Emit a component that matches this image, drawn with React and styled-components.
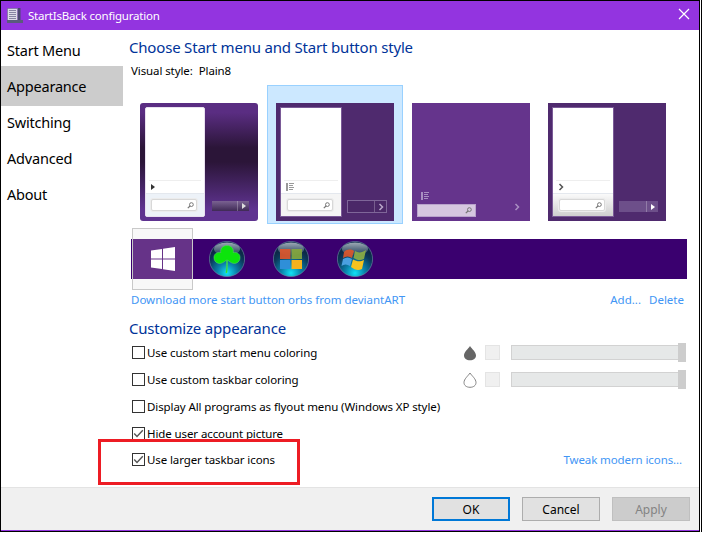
import React from "react";
import styled, { createGlobalStyle } from "styled-components";

const FONT = `"Noto Sans", "Open Sans", "Liberation Sans", sans-serif`;

const Global = createGlobalStyle`
  html, body {
    margin: 0;
    padding: 0;
    background: #fff;
  }
  body {
    width: 702px;
    height: 533px;
    overflow: hidden;
    font-family: ${FONT};
  }
  * {
    box-sizing: border-box;
  }
`;

const Frame = styled.div`
  position: relative;
  width: 700px;
  height: 532px;
  background: #fff;
  border: 1px solid #000;
  box-shadow: 1px 0 0 #fff, 2px 0 0 #000;
  display: flex;
  flex-direction: column;
`;

const TitleBar = styled.div`
  height: 29px;
  background: #9334e0;
  display: flex;
  align-items: center;
  padding-left: 6px;
  gap: 4px;
  color: #fff;
  font-size: 11.5px;
  letter-spacing: -0.2px;
  position: relative;
`;

const CloseBtn = styled.svg`
  position: absolute;
  right: 9px;
  top: 7px;
`;

const Body = styled.div`
  flex: 1;
  display: flex;
  min-height: 0;
`;

const Sidebar = styled.div`
  width: 122px;
  padding-top: 2px;
  display: flex;
  flex-direction: column;
`;

const NavItem = styled.div`
  height: 36px;
  line-height: 36px;
  padding-left: 6px;
  font-size: 14.5px;
  letter-spacing: -0.2px;
  color: #000;
  ${(p) =>
    p.$active &&
    `
    background: #cccccc;
    height: 40px;
    line-height: 40px;
    margin: -2px 0;
  `}
`;

const Main = styled.div`
  flex: 1;
  padding-left: 6px;
  min-width: 0;
`;

const Heading = styled.div`
  font-size: 15px;
  letter-spacing: -0.19px;
  line-height: 20px;
  color: #003399;
  padding-top: ${(p) => p.$top || 0}px;
`;

const StyleLabel = styled.div`
  font-size: 11.5px;
  letter-spacing: -0.1px;
  line-height: 16px;
  margin: 6px 0 0 2px;
  color: #000;
  display: flex;
  gap: 6px;
`;

const ThumbRow = styled.div`
  display: flex;
  margin: 6px 0 0 2px;
`;

const ThumbCell = styled.div`
  width: 136px;
  height: 139px;
  padding: 17px 8px 0;
  border: 1px solid ${(p) => (p.$selected ? "#99d1ff" : "transparent")};
  background: ${(p) => (p.$selected ? "#cce8ff" : "transparent")};
`;

const Thumb = styled.div`
  position: relative;
  width: 118px;
  height: 118px;
  background: ${(p) => p.$bg};
  border-radius: ${(p) => p.$radius || 0}px;
  display: flex;
  padding: 4px 0 4px ${(p) => p.$inset || 4}px;
`;

const Panel = styled.div`
  width: ${(p) => p.$w || 62}px;
  height: 110px;
  background: #fff;
  border: 1px solid ${(p) => p.$edge || "#7a5a97"};
  border-radius: ${(p) => p.$radius || 0}px;
  display: flex;
  flex-direction: column;
  overflow: hidden;
`;

const PanelTop = styled.div`
  flex: 1;
`;

const PanelLink = styled.div`
  height: 13px;
  margin: 0 3px;
  border-top: 1px solid #eeeeee;
  display: flex;
  align-items: center;
  padding-left: 2px;
`;

const PanelBottom = styled.div`
  height: 23px;
  background: ${(p) => p.$bg || "#f5f5f5"};
  border-top: 1px solid #e4e8ee;
  padding: 5px 0 0 ${(p) => p.$inset || 6}px;
`;

const SearchBox = styled.div`
  width: 46px;
  height: 12px;
  background: #fff;
  border: 1px solid #d8d8d8;
  box-shadow: 0 0 0 1px #ececec;
  border-radius: 2px;
  display: flex;
  align-items: center;
  justify-content: flex-end;
  padding-right: 2px;
`;

const Shut = styled.div`
  position: absolute;
  left: ${(p) => p.$left}px;
  top: ${(p) => p.$top}px;
  width: ${(p) => p.$w}px;
  height: ${(p) => p.$h}px;
  display: flex;
  background: ${(p) => p.$bg};
  border: ${(p) => p.$border || "none"};
`;

const ShutMain = styled.div`
  flex: 1;
  border-right: 1px solid rgba(255, 255, 255, 0.25);
`;

const ShutArrow = styled.div`
  width: 11px;
  display: flex;
  align-items: center;
  justify-content: center;
`;

const FlatSearch = styled.div`
  position: absolute;
  left: 5px;
  top: 101px;
  width: 59px;
  height: 13px;
  background: #d6c7e0;
  border: 1px solid #b9a3cc;
  display: flex;
  align-items: center;
  justify-content: flex-end;
  padding-right: 3px;
`;

const FlatIcon = styled.div`
  position: absolute;
  left: ${(p) => p.$left}px;
  top: ${(p) => p.$top}px;
  display: flex;
`;

const OrbBar = styled.div`
  position: relative;
  height: 40px;
  margin: 15px 12px 0 2px;
  background: #3a006f;
  display: flex;
  align-items: center;
  padding-left: 1px;
`;

const OrbSelected = styled.div`
  width: 61px;
  height: 62px;
  flex: none;
  margin: -11px 0;
  border: 1px solid #c9c9c9;
  display: flex;
  align-items: center;
  justify-content: center;
  background: linear-gradient(
    #f8f8f8 0,
    #f8f8f8 10px,
    #663388 10px,
    #663388 50px,
    #f8f8f8 50px
  );
`;

const OrbSlot = styled.div`
  width: 36px;
  height: 36px;
  flex: none;
  margin-left: ${(p) => p.$gap}px;
`;

const LinkRow = styled.div`
  display: flex;
  justify-content: space-between;
  margin: 13px 15px 0 2px;
  font-size: 11.5px;
  line-height: 16px;
  color: #4296f5;
`;

const LinkGroup = styled.div`
  display: flex;
  gap: 8px;
`;

const OptionList = styled.div`
  position: relative;
  margin-top: 1px;
  padding-left: 3px;
`;

const OptionRow = styled.div`
  height: 27px;
  display: flex;
  align-items: center;
  justify-content: space-between;
  font-size: 11.5px;
  letter-spacing: -0.1px;
  color: #000;
  ${(p) => p.$short && "height: 25px;"}
`;

const CheckLabel = styled.div`
  display: flex;
  align-items: center;
  gap: 2px;
`;

const Box = styled.span`
  width: 13px;
  height: 13px;
  border: 1px solid #333;
  background: #fff;
  display: flex;
  align-items: center;
  justify-content: center;
  flex: none;
`;

const ColorControls = styled.div`
  display: flex;
  align-items: center;
  margin-right: 13px;
`;

const Swatch = styled.div`
  width: 15px;
  height: 15px;
  margin-left: 8px;
  background: #f0f0f0;
  border: 1px solid #e4e4e4;
`;

const Slider = styled.div`
  position: relative;
  width: 170px;
  height: 15px;
  margin: 0 5px 0 11px;
  background: #e6e8e8;
  border: 1px solid #d2d2d2;
`;

const SliderThumb = styled.div`
  position: absolute;
  right: -6px;
  top: -3px;
  width: 8px;
  height: 19px;
  background: #cdcdcd;
`;

const TweakLink = styled.span`
  color: #4296f5;
  margin-right: 17px;
`;

const Footer = styled.div`
  height: 43px;
  background: #f0f0f0;
  border-top: 1px solid #e3e3e3;
  display: flex;
  align-items: center;
  justify-content: flex-end;
  gap: 12px;
  padding: 0 9px 0 0;
`;

const Button = styled.div`
  width: 78px;
  height: 24px;
  display: flex;
  align-items: center;
  justify-content: center;
  font-size: 12px;
  background: ${(p) => (p.$disabled ? "#cccccc" : "#e1e1e1")};
  color: ${(p) => (p.$disabled ? "#838383" : "#000")};
  border: ${(p) => (p.$primary ? "2px solid #0078d7" : p.$disabled ? "1px solid #bfbfbf" : "1px solid #adadad")};
`;

const BottomLine = styled.div`
  height: 1px;
  background: #9334e0;
`;

const RedMark = styled.div`
  position: absolute;
  left: 97px;
  top: 438px;
  width: 202px;
  height: 46px;
  border: 3px solid #ed1c24;
`;

const Magnifier = ({ color = "#777" }) => (
  <svg width="7" height="7" viewBox="0 0 7 7">
    <circle cx="4.4" cy="2.6" r="1.9" fill="none" stroke={color} strokeWidth="1" />
    <path d="M3 4 L0.8 6.2" stroke={color} strokeWidth="1.2" />
  </svg>
);

const Chevron = ({ color = "#fff", size = 6 }) => (
  <svg width={size} height={size + 2} viewBox="0 0 6 8">
    <path d="M1.5 1 L4.5 4 L1.5 7" fill="none" stroke={color} strokeWidth="1.5" />
  </svg>
);

const SmallTri = ({ color = "#333" }) => (
  <svg width="4" height="6" viewBox="0 0 4 6">
    <path d="M0 0 L4 3 L0 6 Z" fill={color} />
  </svg>
);

const ListIcon = ({ color = "#999" }) => (
  <svg width="8" height="8" viewBox="0 0 8 8">
    <rect x="0" y="0" width="2" height="8" fill={color} />
    <path d="M3 0.5 H8 M3 2.5 H7 M3 4.5 H8 M3 6.5 H7" stroke={color} strokeWidth="1" />
  </svg>
);

const WinLogo = ({ size = 24 }) => (
  <svg width={size} height={size} viewBox="0 0 24 24">
    <path
      d="M0 3.4 L11 2 V11.5 H0 Z M12 1.8 L24 0 V11.5 H12 Z M0 12.5 H11 V22 L0 20.6 Z M12 12.5 H24 V24 L12 22.2 Z"
      fill="#fff"
    />
  </svg>
);

const OrbBase = ({ id, children }) => (
  <svg width="36" height="36" viewBox="0 0 36 36">
    <defs>
      <radialGradient id={`${id}b`} cx="50%" cy="90%" r="70%">
        <stop offset="0" stopColor="#12e0f5" />
        <stop offset="0.4" stopColor="#0a80aa" />
        <stop offset="0.8" stopColor="#0b3a5c" />
        <stop offset="1" stopColor="#0c2a48" />
      </radialGradient>
      <linearGradient id={`${id}g`} x1="0" y1="0" x2="0" y2="1">
        <stop offset="0" stopColor="#ffffff" stopOpacity="0.6" />
        <stop offset="1" stopColor="#ffffff" stopOpacity="0.05" />
      </linearGradient>
    </defs>
    <circle cx="18" cy="18" r="17.6" fill={`url(#${id}b)`} stroke="#6f93a6" strokeWidth="0.6" />
    <ellipse cx="18" cy="8" rx="13" ry="6.5" fill={`url(#${id}g)`} />
    {children}
  </svg>
);

const CloverOrb = () => (
  <OrbBase id="clover">
    <path
      d="M18 4.5 C22.5 4.5 25 8 24.2 11.6 C28 10.6 31.5 13.2 31 17.2 C30.5 21.4 26.4 23.6 22.6 21.8 C21 21 19.6 20 18.6 19 C18.4 22 18.8 27 18 32 L16.8 32 C17.6 27 17.6 22 17.4 19 C16.4 20 15 21 13.4 21.8 C9.6 23.6 5.5 21.4 5 17.2 C4.5 13.2 8 10.6 11.8 11.6 C11 8 13.5 4.5 18 4.5 Z"
      fill="#0ce40c"
      stroke="#5fdc6a"
      strokeWidth="0.5"
    />
  </OrbBase>
);

const FlagOrb = () => (
  <OrbBase id="flag">
    <rect x="7" y="8" width="10.5" height="10" fill="#e0562a" opacity="0.9" />
    <rect x="18.5" y="8" width="10.5" height="10" fill="#86a83c" opacity="0.9" />
    <rect x="7" y="19" width="10.5" height="9" fill="#2f8fd8" />
    <rect x="18.5" y="19" width="10.5" height="9" fill="#f6b21e" />
  </OrbBase>
);

const WaveOrb = () => (
  <OrbBase id="wave">
    <path d="M7 11 C10 8 14 8 17 10 L15 17 C12 15 9 15 6 17 Z" fill="#e0562a" opacity="0.9" />
    <path d="M18 10 C21 12 25 12 29 9 L27 18 C23 20 20 19 16.5 17 Z" fill="#8db044" opacity="0.9" />
    <path d="M6 18 C9 16 12 16 15 18 L13 25 C10 23 7 23 4.5 25 Z" fill="#4aa0e0" />
    <path d="M16 18.5 C20 20.5 23 21 27 19 L25 28 C21 30 18 29 14 26 Z" fill="#f6c21e" />
  </OrbBase>
);

const DropFilled = () => (
  <svg width="14" height="16" viewBox="0 0 14 16">
    <path d="M7 1 C9 4 13 7 13 10.5 C13 13.5 10.5 15.3 7 15.3 C3.5 15.3 1 13.5 1 10.5 C1 7 5 4 7 1 Z" fill="#666" />
  </svg>
);

const DropEmpty = () => (
  <svg width="14" height="16" viewBox="0 0 14 16">
    <path d="M7 1 C9 4 13 7 13 10.5 C13 13.5 10.5 15.3 7 15.3 C3.5 15.3 1 13.5 1 10.5 C1 7 5 4 7 1 Z" fill="#fff" stroke="#777" strokeWidth="0.9" />
  </svg>
);

const AppIcon = () => (
  <svg width="17" height="16" viewBox="0 0 17 16">
    <rect x="0.5" y="0.5" width="10" height="12" fill="#dcdce8" stroke="#70708e" strokeWidth="0.6" />
    <path d="M2 2.5 H9 M2 4.5 H9 M2 6.5 H9 M2 8.5 H9 M2 10.5 H9" stroke="#7c7c9a" strokeWidth="0.9" />
    <rect x="11" y="0" width="2.5" height="12" fill="#4a4a70" />
    <rect x="0" y="12" width="16" height="3" fill="#5a5a7c" />
  </svg>
);

const CheckMark = () => (
  <svg width="11" height="11" viewBox="0 0 11 11">
    <path d="M1.2 5.5 L4 8.4 L9.8 2.2" fill="none" stroke="#555" strokeWidth="1.4" />
  </svg>
);

const Option = ({ checked, children, short, right }) => (
  <OptionRow $short={short}>
    <CheckLabel>
      <Box>{checked && <CheckMark />}</Box>
      {children}
    </CheckLabel>
    {right}
  </OptionRow>
);

const ColorControl = ({ icon }) => (
  <ColorControls>
    {icon}
    <Swatch />
    <Slider>
      <SliderThumb />
    </Slider>
  </ColorControls>
);

const App = () => {
  return (
    <>
      <Global />
      <Frame>
        <TitleBar>
          <AppIcon />
          StartIsBack configuration
          <CloseBtn width="12" height="12" viewBox="0 0 12 12">
            <path d="M1 1 L11 11 M11 1 L1 11" stroke="#fff" strokeWidth="1.2" />
          </CloseBtn>
        </TitleBar>
        <Body>
          <Sidebar>
            <NavItem>Start Menu</NavItem>
            <NavItem $active>Appearance</NavItem>
            <NavItem>Switching</NavItem>
            <NavItem>Advanced</NavItem>
            <NavItem>About</NavItem>
          </Sidebar>
          <Main>
            <Heading $top={7}>Choose Start menu and Start button style</Heading>
            <StyleLabel>
              <span>Visual style:</span>
              <span>Plain8</span>
            </StyleLabel>
            <ThumbRow>
              <ThumbCell>
                <Thumb
                  $radius={3}
                  $inset={5}
                  $bg="linear-gradient(#5a2d82 0, #5a2d82 8%, #2b1538 38%, #2b1538 50%, #5f3390 90%)"
                >
                  <Panel $w={60} $radius={2} $edge="#e8e0ef">
                    <PanelTop />
                    <PanelLink>
                      <SmallTri />
                    </PanelLink>
                    <PanelBottom $bg="#edf2f8" $inset={5}>
                      <SearchBox>
                        <Magnifier />
                      </SearchBox>
                    </PanelBottom>
                  </Panel>
                  <Shut $left={72} $top={98} $w={37} $h={10} $bg="linear-gradient(#7a6292, #3f2a55)">
                    <ShutMain />
                    <ShutArrow>
                      <SmallTri color="#ddd" />
                    </ShutArrow>
                  </Shut>
                </Thumb>
              </ThumbCell>
              <ThumbCell $selected>
                <Thumb $bg="#4f2a6e">
                  <Panel>
                    <PanelTop />
                    <PanelLink>
                      <ListIcon />
                    </PanelLink>
                    <PanelBottom>
                      <SearchBox>
                        <Magnifier />
                      </SearchBox>
                    </PanelBottom>
                  </Panel>
                  <Shut $left={71} $top={97} $w={40} $h={13} $bg="#4b2868" $border="1px solid #7f6699">
                    <ShutMain />
                    <ShutArrow>
                      <Chevron color="#b9a8ca" />
                    </ShutArrow>
                  </Shut>
                </Thumb>
              </ThumbCell>
              <ThumbCell>
                <Thumb $bg="#65348c">
                  <FlatIcon $left={9} $top={89}>
                    <ListIcon color="#a98fc2" />
                  </FlatIcon>
                  <FlatSearch>
                    <Magnifier />
                  </FlatSearch>
                  <FlatIcon $left={102} $top={100}>
                    <Chevron color="#a98fc2" />
                  </FlatIcon>
                </Thumb>
              </ThumbCell>
              <ThumbCell>
                <Thumb $bg="#4f2a6e">
                  <Panel>
                    <PanelTop />
                    <PanelLink>
                      <Chevron color="#555" />
                    </PanelLink>
                    <PanelBottom $bg="linear-gradient(#fafafa, #cfcfcf)">
                      <SearchBox>
                        <Magnifier />
                      </SearchBox>
                    </PanelBottom>
                  </Panel>
                  <Shut $left={71} $top={98} $w={39} $h={11} $bg="#6d4f8a">
                    <ShutMain />
                    <ShutArrow>
                      <SmallTri color="#fff" />
                    </ShutArrow>
                  </Shut>
                </Thumb>
              </ThumbCell>
            </ThumbRow>
            <OrbBar>
              <OrbSelected>
                <WinLogo />
              </OrbSelected>
              <OrbSlot $gap={16}>
                <CloverOrb />
              </OrbSlot>
              <OrbSlot $gap={28}>
                <FlagOrb />
              </OrbSlot>
              <OrbSlot $gap={28}>
                <WaveOrb />
              </OrbSlot>
            </OrbBar>
            <LinkRow>
              <span>Download more start button orbs from deviantART</span>
              <LinkGroup>
                <span>Add...</span>
                <span>Delete</span>
              </LinkGroup>
            </LinkRow>
            <Heading $top={10}>Customize appearance</Heading>
            <OptionList>
              <Option right={<ColorControl icon={<DropFilled />} />}>Use custom start menu coloring</Option>
              <Option right={<ColorControl icon={<DropEmpty />} />}>Use custom taskbar coloring</Option>
              <Option>Display All programs as flyout menu (Windows XP style)</Option>
              <Option checked>Hide user account picture</Option>
              <Option checked short right={<TweakLink>Tweak modern icons...</TweakLink>}>
                Use larger taskbar icons
              </Option>
            </OptionList>
          </Main>
        </Body>
        <Footer>
          <Button $primary>OK</Button>
          <Button>Cancel</Button>
          <Button $disabled>Apply</Button>
        </Footer>
        <BottomLine />
        <RedMark />
      </Frame>
    </>
  );
};

export default App;
